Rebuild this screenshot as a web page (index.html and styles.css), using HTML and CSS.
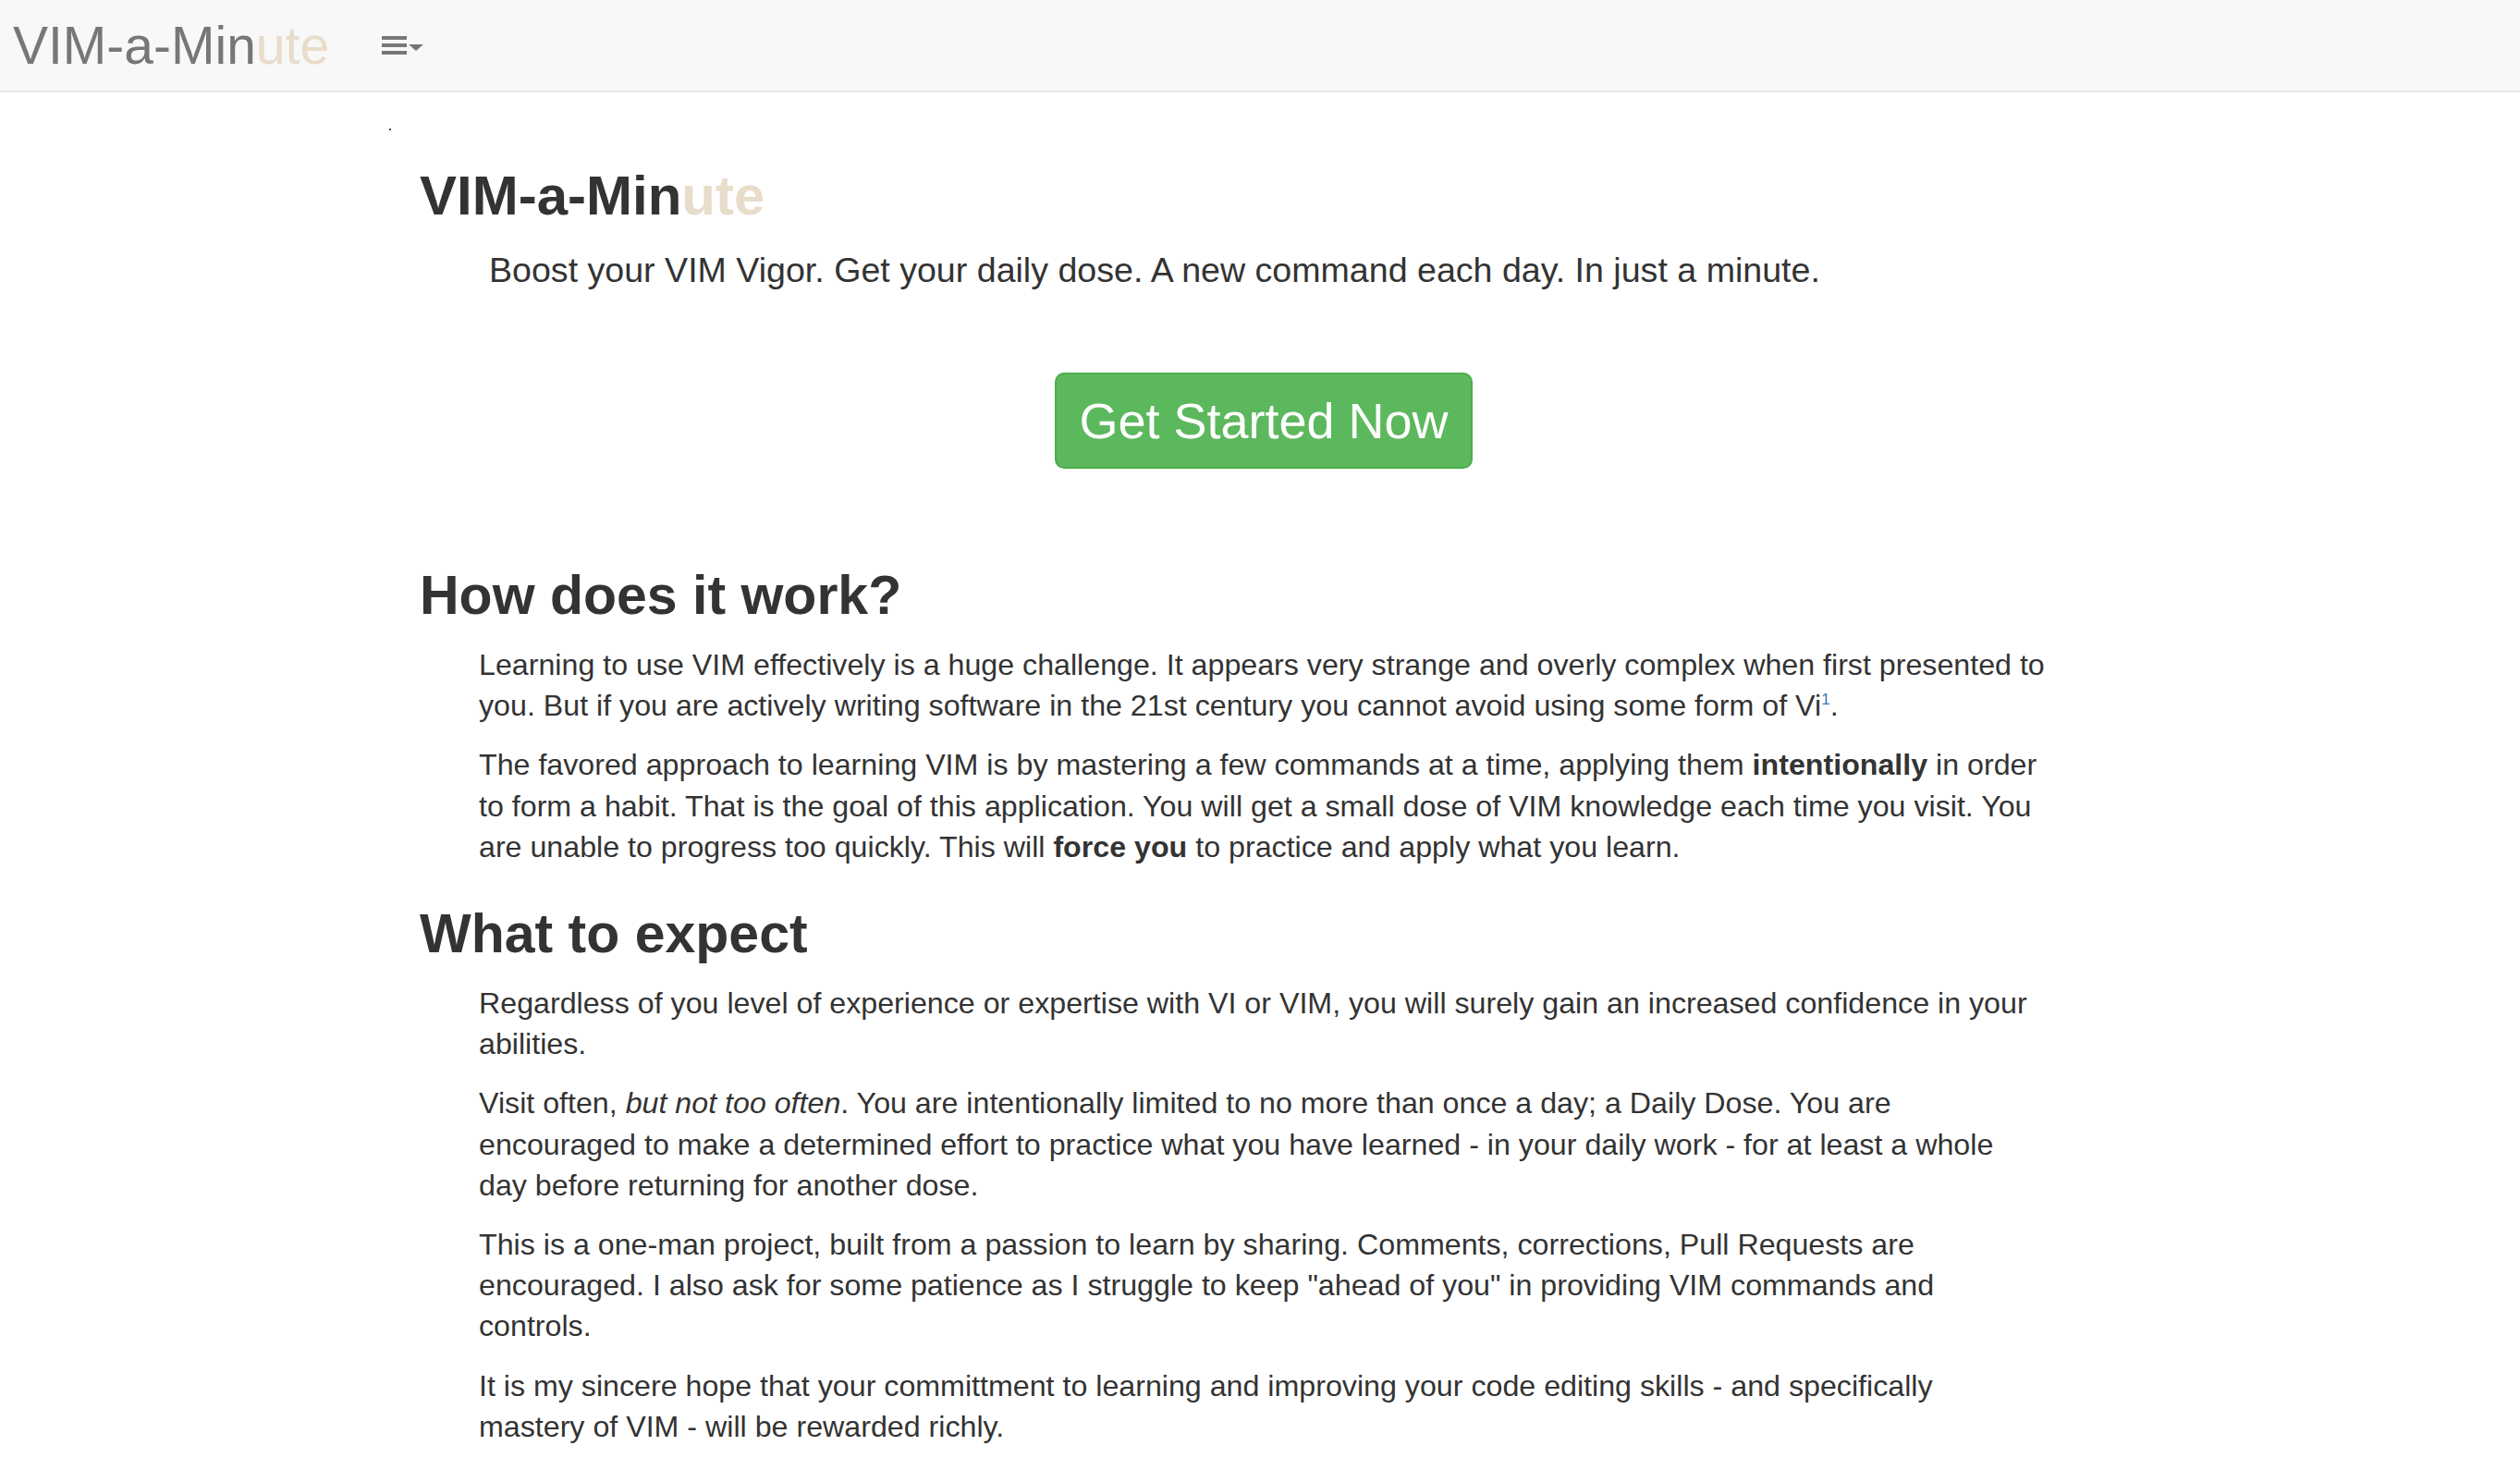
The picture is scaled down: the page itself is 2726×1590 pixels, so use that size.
FILE: index.html
```html
<!DOCTYPE html>
<html lang="en">
<head>
<meta charset="utf-8">
<title>VIM-a-Minute</title>
<link rel="stylesheet" href="styles.css">
</head>
<body>
<header class="navbar">
  <a class="brand" href="#">VIM-a-Min<span class="fade">ute</span></a>
  <button class="toggle" type="button" aria-label="Menu">
    <svg width="46" height="20" viewBox="0 0 46 20">
      <rect x="0" y="0" width="27" height="4" fill="#777"/>
      <rect x="0" y="8" width="27" height="4" fill="#777"/>
      <rect x="0" y="16" width="27" height="4" fill="#777"/>
      <polygon points="29,9 45,9 37,16" fill="#777"/>
    </svg>
  </button>
</header>
<div class="speck"></div>
<main class="container">
  <h1 class="title">VIM-a-Min<span class="fade">ute</span></h1>
  <p class="lead">Boost your VIM Vigor. Get your daily dose. A new command each day. In just a minute.</p>
  <div class="cta">
    <a class="btn" href="#">Get Started Now</a>
  </div>

  <section class="block first">
    <h2>How does it work?</h2>
    <p>Learning to use VIM effectively is a huge challenge. It appears very strange and overly complex when first presented to you. But if you are actively writing software in the 21st century you cannot avoid using some form of Vi<sup><a href="#">1</a></sup>.</p>
    <p>The favored approach to learning VIM is by mastering a few commands at a time, applying them <strong>intentionally</strong> in order to form a habit. That is the goal of this application. You will get a small dose of VIM knowledge each time you visit. You are unable to progress too quickly. This will <strong>force you</strong> to practice and apply what you learn.</p>
  </section>

  <section class="block">
    <h2>What to expect</h2>
    <p>Regardless of you level of experience or expertise with VI or VIM, you will surely gain an increased confidence in your abilities.</p>
    <p>Visit often, <em>but not too often</em>. You are intentionally limited to no more than once a day; a Daily Dose. You are encouraged to make a determined effort to practice what you have learned - in your daily work - for at least a whole day before returning for another dose.</p>
    <p>This is a one-man project, built from a passion to learn by sharing. Comments, corrections, Pull Requests are encouraged. I also ask for some patience as I struggle to keep "ahead of you" in providing VIM commands and controls.</p>
    <p class="closing">It is my sincere hope that your committment to learning and improving your code editing skills - and specifically mastery of VIM - will be rewarded richly.</p>
  </section>
</main>
</body>
</html>
```
FILE: styles.css
```css
html, body {
  margin: 0;
  padding: 0;
  background: #fff;
}

body {
  font-family: "Liberation Sans", Arial, Helvetica, sans-serif;
  color: #333;
}

.navbar {
  height: 98px;
  background: #f8f8f8;
  border-bottom: 2px solid #e7e7e7;
  display: flex;
  align-items: center;
  padding-left: 14px;
}

.brand {
  font-size: 57px;
  line-height: 98px;
  color: #777;
  text-decoration: none;
}

.fade {
  color: #e8dccb;
}

.toggle {
  margin-left: 57px;
  padding: 0;
  border: 0;
  background: transparent;
  display: flex;
  align-items: center;
  height: 20px;
}

.toggle svg {
  display: block;
}

.speck {
  width: 2px;
  height: 2px;
  background: #444;
  margin: 39px 0 0 421px;
}

.container {
  width: 1818px;
  margin: 0 auto;
}

.title {
  margin: 38px 0 0;
  font-size: 60px;
  line-height: 66px;
  font-weight: bold;
  color: #333;
}

.lead {
  margin: 25px 0 0;
  padding-left: 75px;
  font-size: 37.6px;
  line-height: 44px;
}

.cta {
  margin-top: 89px;
  text-align: center;
  padding-left: 8px;
}

.btn {
  display: inline-block;
  font-size: 54px;
  line-height: 100px;
  padding: 0 24px;
  color: #fff;
  background: #5cb85c;
  border: 2px solid #4cae4c;
  border-radius: 10px;
  text-decoration: none;
}

.block.first {
  margin-top: 104px;
}

.block + .block {
  margin-top: 39px;
}

.block h2 {
  margin: 0 0 20px;
  font-size: 59px;
  line-height: 66px;
  font-weight: bold;
  color: #333;
}

.block p {
  margin: 0 0 20px;
  padding-left: 64px;
  width: 1697.5px;
  font-size: 32.2px;
  line-height: 44.2px;
}

.block p.closing {
  width: 1680px;
}

sup {
  font-size: 17px;
  line-height: 0;
  vertical-align: 12px;
}

sup a {
  color: #337ab7;
  text-decoration: none;
}
```
